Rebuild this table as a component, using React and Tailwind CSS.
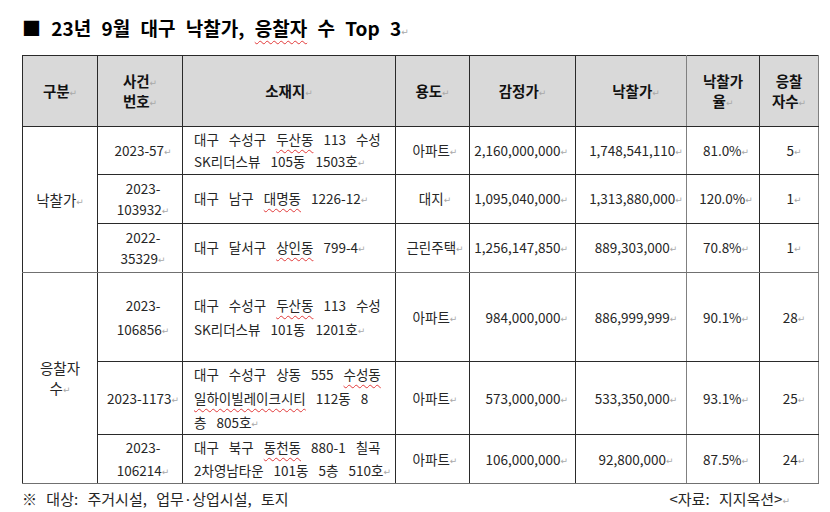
import React from "react";

const U = ({ children }) => (
  <span className="underline decoration-wavy decoration-[#e23a3a] decoration-1 underline-offset-[4px]">
    {children}
  </span>
);

const R = () => (
  <span className="font-['DejaVu_Sans',sans-serif] text-[9px] leading-none font-normal text-[#a8a8a8] align-[1px] [word-spacing:0]">
    ↵
  </span>
);

const B = "border border-[#2a2a2a]";
const G = "border-r-[#808080]";

const rows = [
  {
    h: "h-[48px]",
    lh: "leading-[21.5px]",
    no: ["2023-57"],
    addr: [
      <>대구 수성구 <U>두산동</U> 113 수성</>,
      <>SK리더스뷰 105동 1503호</>,
    ],
    use: "아파트",
    appr: "2,160,000,000",
    bid: "1,748,541,110",
    rate: "81.0%",
    cnt: "5",
  },
  {
    h: "h-[49px]",
    lh: "leading-[21.5px]",
    no: ["2023-", "103932"],
    addr: [<>대구 남구 <U>대명동</U> 1226-12</>],
    use: "대지",
    appr: "1,095,040,000",
    bid: "1,313,880,000",
    rate: "120.0%",
    cnt: "1",
  },
  {
    h: "h-[49px]",
    lh: "leading-[21.5px]",
    no: ["2022-", "35329"],
    addr: [<>대구 달서구 <U>상인동</U> 799-4</>],
    use: "근린주택",
    appr: "1,256,147,850",
    bid: "889,303,000",
    rate: "70.8%",
    cnt: "1",
    grayBottom: true,
  },
  {
    h: "h-[89px]",
    lh: "leading-[24px]",
    no: ["2023-", "106856"],
    addr: [
      <>대구 수성구 <U>두산동</U> 113 수성</>,
      <>SK리더스뷰 101동 1201호</>,
    ],
    use: "아파트",
    appr: "984,000,000",
    bid: "886,999,999",
    rate: "90.1%",
    cnt: "28",
  },
  {
    h: "h-[73px]",
    lh: "leading-[24px]",
    no: ["2023-1173"],
    addr: [
      <>대구 수성구 상동 555 <U>수성동</U></>,
      <><U>일하이빌레이크시티</U> 112동 8</>,
      <>층 805호</>,
    ],
    use: "아파트",
    appr: "573,000,000",
    bid: "533,350,000",
    rate: "93.1%",
    cnt: "25",
  },
  {
    h: "h-[49px]",
    lh: "leading-[23px]",
    no: ["2023-", "106214"],
    addr: [
      <>대구 북구 <U>동천동</U> 880-1 칠곡</>,
      <>2차영남타운 101동 5층 510호</>,
    ],
    use: "아파트",
    appr: "106,000,000",
    bid: "92,800,000",
    rate: "87.5%",
    cnt: "24",
    grayBottom: true,
  },
];

export default function App() {
  return (
    <div className="w-[830px] h-[512px] bg-white overflow-hidden pl-[22px] font-['Noto_Sans_CJK_KR',sans-serif] text-[#262626]">
      <div className="pt-[16px] h-[40px] leading-[24px] text-[19px] font-bold text-black [word-spacing:6px] whitespace-nowrap">
        ■ 23년 9월 대구 낙찰가, <U>응찰자</U> 수 Top 3<R />
      </div>

      <table className="mt-[15px] table-fixed border-collapse w-[796px] text-[13.5px] [word-spacing:7px]">
        <colgroup>
          <col className="w-[75px]" />
          <col className="w-[85px]" />
          <col className="w-[213px]" />
          <col className="w-[74px]" />
          <col className="w-[106px]" />
          <col className="w-[111px]" />
          <col className="w-[73px]" />
          <col className="w-[59px]" />
        </colgroup>
        <thead>
          <tr className="h-[71px] bg-[#d9d9d9] text-[14.5px] font-bold text-[#111] leading-[20px] text-center">
            <th className={`${B} p-0`}>구분<R /></th>
            <th className={`${B} p-0`}>사건<R /><br />번호<R /></th>
            <th className={`${B} p-0`}>소재지<R /></th>
            <th className={`${B} p-0`}>용도<R /></th>
            <th className={`${B} p-0`}>감정가<R /></th>
            <th className={`${B} ${G} p-0 pl-[10px]`}>낙찰가<R /></th>
            <th className={`${B} p-0`}>낙찰가<br />율<R /></th>
            <th className={`${B} border-r-[#808080] p-0`}>응찰<br />자수<R /></th>
          </tr>
        </thead>
        <tbody>
          {rows.map((r, i) => {
            const bb = r.grayBottom ? "border-b-[#707070]" : "";
            return (
              <tr key={i} className={`${r.h} ${r.lh}`}>
                {i === 0 && (
                  <td rowSpan={3} className={`${B} border-b-[#707070] p-0 text-center text-[14.5px] leading-[20px]`}>
                    낙찰가<R />
                  </td>
                )}
                {i === 3 && (
                  <td rowSpan={3} className={`${B} border-b-[#707070] p-0 text-center text-[14.5px] leading-[20px]`}>
                    응찰자<br />수<R />
                  </td>
                )}
                <td className={`${B} ${bb} p-0 pl-[6px] text-center whitespace-nowrap`}>
                  {r.no.map((l, j) => (
                    <div key={j}>
                      {l}
                      {j === r.no.length - 1 && <R />}
                    </div>
                  ))}
                </td>
                <td className={`${B} ${bb} p-0 pl-[11px] pr-[2px] text-left whitespace-nowrap`}>
                  {r.addr.map((l, j) => (
                    <div key={j}>
                      {l}
                      {j === r.addr.length - 1 && <R />}
                    </div>
                  ))}
                </td>
                <td className={`${B} ${bb} p-0 pl-[5px] text-center whitespace-nowrap`}>
                  {r.use}<R />
                </td>
                <td className={`${B} ${bb} p-0 pr-[7px] text-right whitespace-nowrap`}>
                  {r.appr}<R />
                </td>
                <td className={`${B} ${G} ${bb} p-0 pl-[10px] text-center whitespace-nowrap`}>
                  {r.bid}<R />
                </td>
                <td className={`${B} ${bb} p-0 pl-[6px] text-center whitespace-nowrap`}>
                  {r.rate}<R />
                </td>
                <td className={`${B} border-r-[#808080] ${bb} p-0 pl-[10px] text-center whitespace-nowrap`}>
                  {r.cnt}<R />
                </td>
              </tr>
            );
          })}
        </tbody>
      </table>

      <div className="mt-[5px] w-[796px] pr-[28px] flex justify-between text-[15px] leading-[20px] text-[#262626] [word-spacing:6px]">
        <span>※ 대상: 주거시설, 업무·상업시설, 토지</span>
        <span>&lt;자료: 지지옥션&gt;<R /></span>
      </div>
    </div>
  );
}
